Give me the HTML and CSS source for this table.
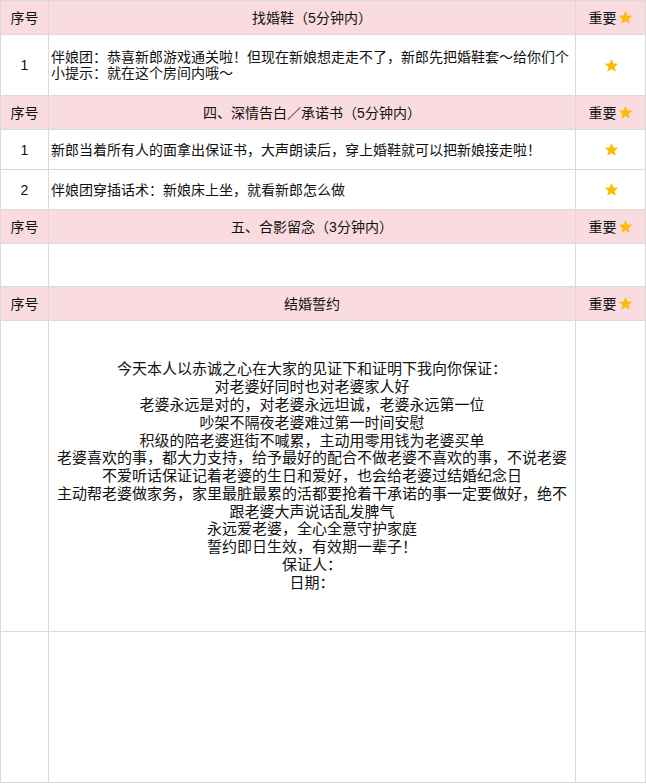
FILE: index.html
```html
<!DOCTYPE html>
<html lang="zh-CN">
<head>
<meta charset="utf-8">
<title>婚礼流程</title>
<link rel="stylesheet" href="styles.css">
</head>
<body>
<div class="sheet">
  <div class="row head">
    <div class="cell num">序号</div>
    <div class="cell title">找婚鞋（5分钟内）</div>
    <div class="cell imp">重要<svg class="star" viewBox="0 0 24 24"><path d="M12 1.5l3.2 7.1 7.6.7-5.8 5.1 1.8 7.6L12 18l-6.8 4 1.8-7.6-5.8-5.1 7.6-.7z"/></svg></div>
  </div>
  <div class="row r61">
    <div class="cell num">1</div>
    <div class="cell text">伴娘团：恭喜新郎游戏通关啦！但现在新娘想走走不了，新郎先把婚鞋套～给你们个小提示：就在这个房间内哦～</div>
    <div class="cell imp"><svg class="star" viewBox="0 0 24 24"><path d="M12 1.5l3.2 7.1 7.6.7-5.8 5.1 1.8 7.6L12 18l-6.8 4 1.8-7.6-5.8-5.1 7.6-.7z"/></svg></div>
  </div>
  <div class="row head">
    <div class="cell num">序号</div>
    <div class="cell title">四、深情告白／承诺书（5分钟内）</div>
    <div class="cell imp">重要<svg class="star" viewBox="0 0 24 24"><path d="M12 1.5l3.2 7.1 7.6.7-5.8 5.1 1.8 7.6L12 18l-6.8 4 1.8-7.6-5.8-5.1 7.6-.7z"/></svg></div>
  </div>
  <div class="row r40">
    <div class="cell num">1</div>
    <div class="cell text">新郎当着所有人的面拿出保证书，大声朗读后，穿上婚鞋就可以把新娘接走啦！</div>
    <div class="cell imp"><svg class="star" viewBox="0 0 24 24"><path d="M12 1.5l3.2 7.1 7.6.7-5.8 5.1 1.8 7.6L12 18l-6.8 4 1.8-7.6-5.8-5.1 7.6-.7z"/></svg></div>
  </div>
  <div class="row r40">
    <div class="cell num">2</div>
    <div class="cell text">伴娘团穿插话术：新娘床上坐，就看新郎怎么做</div>
    <div class="cell imp"><svg class="star" viewBox="0 0 24 24"><path d="M12 1.5l3.2 7.1 7.6.7-5.8 5.1 1.8 7.6L12 18l-6.8 4 1.8-7.6-5.8-5.1 7.6-.7z"/></svg></div>
  </div>
  <div class="row head">
    <div class="cell num">序号</div>
    <div class="cell title">五、合影留念（3分钟内）</div>
    <div class="cell imp">重要<svg class="star" viewBox="0 0 24 24"><path d="M12 1.5l3.2 7.1 7.6.7-5.8 5.1 1.8 7.6L12 18l-6.8 4 1.8-7.6-5.8-5.1 7.6-.7z"/></svg></div>
  </div>
  <div class="row r43">
    <div class="cell num"></div>
    <div class="cell text"></div>
    <div class="cell imp"></div>
  </div>
  <div class="row head">
    <div class="cell num">序号</div>
    <div class="cell title">结婚誓约</div>
    <div class="cell imp">重要<svg class="star" viewBox="0 0 24 24"><path d="M12 1.5l3.2 7.1 7.6.7-5.8 5.1 1.8 7.6L12 18l-6.8 4 1.8-7.6-5.8-5.1 7.6-.7z"/></svg></div>
  </div>
  <div class="row r311">
    <div class="cell num"></div>
    <div class="cell vow">
      <div class="line">今天本人以赤诚之心在大家的见证下和证明下我向你保证：</div>
      <div class="line">对老婆好同时也对老婆家人好</div>
      <div class="line">老婆永远是对的，对老婆永远坦诚，老婆永远第一位</div>
      <div class="line">吵架不隔夜老婆难过第一时间安慰</div>
      <div class="line">积级的陪老婆逛街不喊累，主动用零用钱为老婆买单</div>
      <div class="line">老婆喜欢的事，都大力支持，给予最好的配合不做老婆不喜欢的事，不说老婆不爱听话保证记着老婆的生日和爱好，也会给老婆过结婚纪念日</div>
      <div class="line">主动帮老婆做家务，家里最脏最累的活都要抢着干承诺的事一定要做好，绝不跟老婆大声说话乱发脾气</div>
      <div class="line">永远爱老婆，全心全意守护家庭</div>
      <div class="line">誓约即日生效，有效期一辈子！</div>
      <div class="line">保证人：</div>
      <div class="line">日期：</div>
    </div>
    <div class="cell imp"></div>
  </div>
  <div class="row r151">
    <div class="cell num"></div>
    <div class="cell text"></div>
    <div class="cell imp"></div>
  </div>
</div>
</body>
</html>
```

FILE: styles.css
```css
* {
  box-sizing: border-box;
}

html, body {
  margin: 0;
  padding: 0;
  background: #ffffff;
}

body {
  font-family: "Liberation Sans", "Noto Sans CJK SC", sans-serif;
  font-size: 14px;
  color: #111111;
  width: 646px;
  height: 784px;
  overflow: hidden;
}

.sheet {
  width: 646px;
  border-top: 1px solid #dadada;
  border-left: 1px solid #dadada;
}

.row {
  display: grid;
  grid-template-columns: 48px 527px 70px;
  height: 34px;
}

.head {
  background: #fadbe0;
}

.r61 { height: 61px; }
.r40 { height: 40px; }
.r43 { height: 43px; }
.r311 { height: 311px; }
.r151 { height: 151px; }

.cell {
  border-right: 1px solid #dadada;
  border-bottom: 1px solid #dadada;
  display: flex;
  align-items: center;
  line-height: 16px;
}

.num {
  justify-content: center;
}

.title {
  justify-content: center;
}

.imp {
  justify-content: center;
}

.text {
  padding: 0 2px;
}

.vow {
  padding: 0 4px;
  font-size: 15px;
  line-height: 17.8px;
  text-align: center;
  flex-direction: column;
  justify-content: center;
}

.line {
  width: 100%;
}

.star {
  width: 15px;
  height: 15px;
  fill: #fbbc05;
  flex: none;
  margin-left: 1px;
}
```
